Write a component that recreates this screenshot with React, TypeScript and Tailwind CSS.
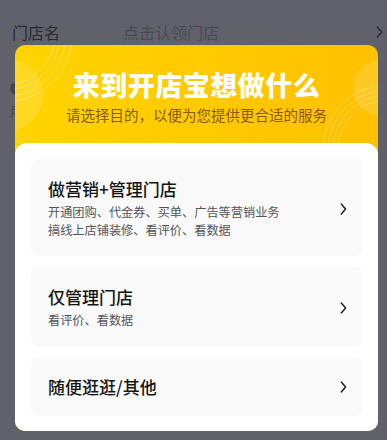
import React from "react";

const Chevron = ({ className = "" }: { className?: string }) => (
  <svg width="7" height="12" viewBox="0 0 7 12" className={className} fill="none">
    <path d="M1.3 1 L5.6 6 L1.3 11" stroke="currentColor" strokeWidth="1.4" strokeLinecap="round" strokeLinejoin="round" />
  </svg>
);

const Decor = () => (
  <svg className="absolute left-0 top-0 pointer-events-none" width="363" height="110" viewBox="0 0 363 110">
    <circle cx="-8" cy="50" r="36" fill="white" fillOpacity="0.13" />
    <g stroke="white" strokeOpacity="0.35" strokeWidth="1" fill="none">
      <circle cx="-10" cy="-10" r="50" />
      <circle cx="-10" cy="-10" r="55" />
      <circle cx="-10" cy="-10" r="61" />
      <circle cx="-10" cy="-10" r="67" />
    </g>
    <circle cx="366" cy="43" r="28" fill="white" fillOpacity="0.14" />
    <g stroke="white" strokeOpacity="0.3" strokeWidth="1" fill="none">
      <circle cx="373" cy="105" r="50" />
      <circle cx="373" cy="105" r="55" />
      <circle cx="373" cy="105" r="60" />
      <circle cx="373" cy="105" r="65" />
    </g>
  </svg>
);

export default function App() {
  const font = { fontFamily: '"Noto Sans CJK SC", "Noto Sans", sans-serif' };
  return (
    <div className="relative w-[387px] h-[440px] overflow-hidden bg-[#61616b]" style={font}>
      {/* background page (dimmed) */}
      <div className="flex items-center h-[64px] pl-[12px] pr-[4px]">
        <span className="text-[16px] text-[#2a2a31] w-[111px] leading-none">门店名</span>
        <span className="text-[16px] text-[#4a4a54] leading-none flex-1">点击认领门店</span>
        <Chevron className="text-[#2a2a31]" />
      </div>
      <div className="pl-[10px] mt-[18px] flex flex-col gap-[8px]">
        <svg width="12" height="14" viewBox="0 0 12 14">
          <path d="M6 0.5 L11.5 2.5 V7 C11.5 10 9 12.5 6 13.5 C3 12.5 0.5 10 0.5 7 V2.5 Z" fill="#45454d" />
        </svg>
        <span className="text-[13px] text-[#45454d] leading-none">用</span>
      </div>

      {/* modal */}
      <div className="absolute left-[15px] top-[45px] w-[363px] rounded-[10px] overflow-hidden bg-gradient-to-r from-[#ffd400] to-[#ffc000]">
        <div className="relative h-[98px]">
          <Decor />
          <div className="relative flex flex-col items-center pt-[22px]">
            <div className="text-[27px] leading-[36px] font-black text-white tracking-[0.5px]">来到开店宝想做什么</div>
            <div className="mt-[2px] text-[14.5px] leading-[20px] text-[#8a5a12]">请选择目的，以便为您提供更合适的服务</div>
          </div>
        </div>
        <div className="relative bg-white rounded-t-[12px] px-[16px] pt-[16px] pb-[15px] flex flex-col gap-[11px]">
          <div className="bg-[#f9f9f9] rounded-[7px] pl-[17px] pr-[15px] pt-[19px] pb-[17px] flex items-center">
            <div className="flex-1 flex flex-col">
              <div className="text-[17px] leading-[22px] font-medium text-[#151515]">做营销+管理门店</div>
              <div className="mt-[3px] text-[12.2px] leading-[18px] text-[#555558]">开通团购、代金券、买单、广告等营销业务</div>
              <div className="text-[12.2px] leading-[18px] text-[#555558]">搞线上店铺装修、看评价、看数据</div>
            </div>
            <Chevron className="text-[#1a1a22]" />
          </div>
          <div className="bg-[#f9f9f9] rounded-[7px] pl-[17px] pr-[15px] pt-[19px] pb-[17px] flex items-center">
            <div className="flex-1 flex flex-col">
              <div className="text-[17px] leading-[22px] font-medium text-[#151515]">仅管理门店</div>
              <div className="mt-[3px] text-[12.2px] leading-[18px] text-[#555558]">看评价、看数据</div>
            </div>
            <Chevron className="text-[#1a1a22]" />
          </div>
          <div className="bg-[#f9f9f9] rounded-[7px] pl-[17px] pr-[15px] h-[59px] flex items-center">
            <div className="flex-1 text-[17px] leading-[22px] font-medium text-[#151515]">随便逛逛/其他</div>
            <Chevron className="text-[#1a1a22]" />
          </div>
        </div>
      </div>
    </div>
  );
}
